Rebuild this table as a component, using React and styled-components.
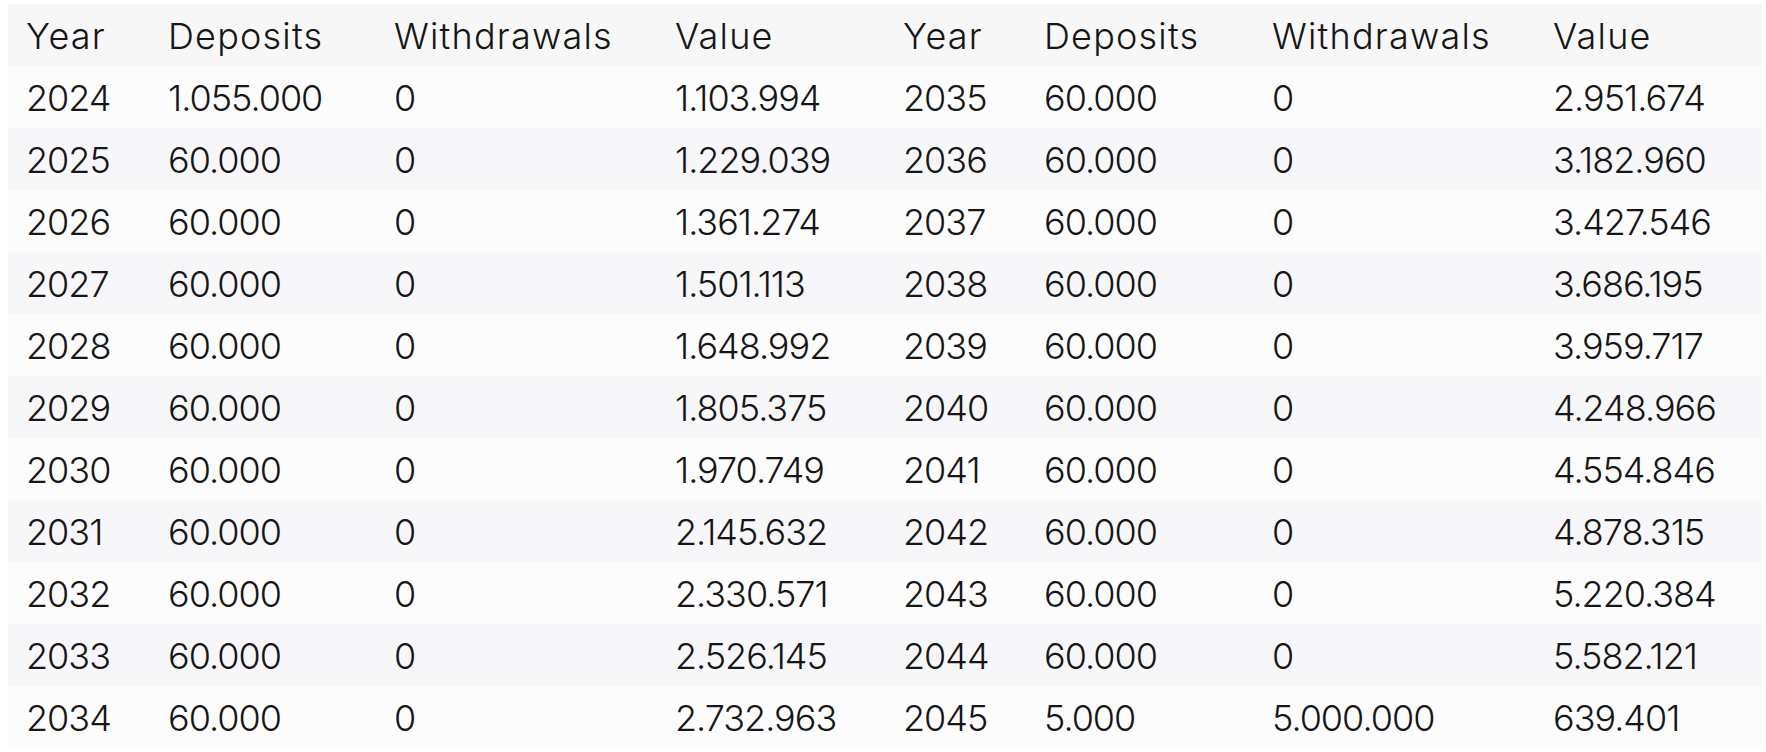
import React from "react";
import styled, { createGlobalStyle } from "styled-components";

const GlobalStyle = createGlobalStyle`
  body {
    margin: 4px 0 0 8px;
    background: #ffffff;
    font-family: Inter, "Noto Sans", sans-serif;
  }
`;

const COLUMNS = [142, 226, 281, 228, 141, 228, 281, 227];
const HEADERS = ["Year", "Deposits", "Withdrawals", "Value", "Year", "Deposits", "Withdrawals", "Value"];

const LEFT = [
  [2024, "1.055.000", "0", "1.103.994"],
  [2025, "60.000", "0", "1.229.039"],
  [2026, "60.000", "0", "1.361.274"],
  [2027, "60.000", "0", "1.501.113"],
  [2028, "60.000", "0", "1.648.992"],
  [2029, "60.000", "0", "1.805.375"],
  [2030, "60.000", "0", "1.970.749"],
  [2031, "60.000", "0", "2.145.632"],
  [2032, "60.000", "0", "2.330.571"],
  [2033, "60.000", "0", "2.526.145"],
  [2034, "60.000", "0", "2.732.963"],
];

const RIGHT = [
  [2035, "60.000", "0", "2.951.674"],
  [2036, "60.000", "0", "3.182.960"],
  [2037, "60.000", "0", "3.427.546"],
  [2038, "60.000", "0", "3.686.195"],
  [2039, "60.000", "0", "3.959.717"],
  [2040, "60.000", "0", "4.248.966"],
  [2041, "60.000", "0", "4.554.846"],
  [2042, "60.000", "0", "4.878.315"],
  [2043, "60.000", "0", "5.220.384"],
  [2044, "60.000", "0", "5.582.121"],
  [2045, "5.000", "5.000.000", "639.401"],
];

const Table = styled.table`
  width: 1754px;
  table-layout: fixed;
  border-collapse: collapse;
  color: #161616;
  font-size: 36px;
  font-weight: 300;
`;

const HeadRow = styled.tr`
  background: #f7f7f8;
`;

const Row = styled.tr`
  background: ${(p) => (p.$striped ? "#f7f7f9" : "#fcfcfc")};
`;

const HeadCell = styled.th`
  padding: 2px 0 0 18px;
  height: 60px;
  line-height: 60px;
  text-align: left;
  font-weight: 300;
  letter-spacing: 1.2px;
  white-space: nowrap;
  vertical-align: top;
`;

const Cell = styled.td`
  padding: 2px 0 0 18px;
  height: 60px;
  line-height: 60px;
  letter-spacing: -1px;
  white-space: nowrap;
  vertical-align: top;
`;

export default function App() {
  return (
    <>
      <GlobalStyle />
      <Table>
        <colgroup>
          {COLUMNS.map((w, i) => (
            <col key={i} style={{ width: w }} />
          ))}
        </colgroup>
        <thead>
          <HeadRow>
            {HEADERS.map((h, i) => (
              <HeadCell key={i}>{h}</HeadCell>
            ))}
          </HeadRow>
        </thead>
        <tbody>
          {LEFT.map((left, i) => (
            <Row key={left[0]} $striped={i % 2 === 1}>
              {[...left, ...RIGHT[i]].map((v, j) => (
                <Cell key={j}>{v}</Cell>
              ))}
            </Row>
          ))}
        </tbody>
      </Table>
    </>
  );
}
